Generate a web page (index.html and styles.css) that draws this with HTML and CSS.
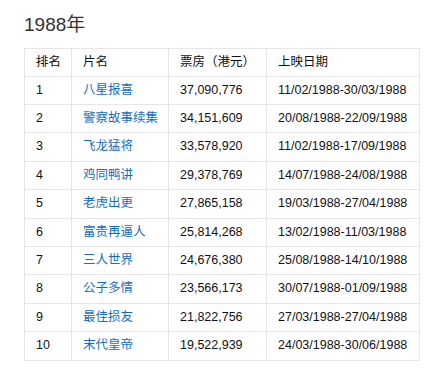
FILE: index.html
```html
<!DOCTYPE html>
<html lang="zh-CN">
<head>
<meta charset="utf-8">
<title>1988年</title>
<link rel="stylesheet" href="styles.css">
</head>
<body>
<div class="page">
  <h2 class="title">1988年</h2>
  <table class="box">
    <colgroup>
      <col class="c-rank">
      <col class="c-name">
      <col class="c-gross">
      <col class="c-date">
    </colgroup>
    <thead>
      <tr><th>排名</th><th>片名</th><th>票房（港元）</th><th>上映日期</th></tr>
    </thead>
    <tbody>
      <tr><td>1</td><td><a href="#">八星报喜</a></td><td>37,090,776</td><td>11/02/1988-30/03/1988</td></tr>
      <tr><td>2</td><td><a href="#">警察故事续集</a></td><td>34,151,609</td><td>20/08/1988-22/09/1988</td></tr>
      <tr><td>3</td><td><a href="#">飞龙猛将</a></td><td>33,578,920</td><td>11/02/1988-17/09/1988</td></tr>
      <tr><td>4</td><td><a href="#">鸡同鸭讲</a></td><td>29,378,769</td><td>14/07/1988-24/08/1988</td></tr>
      <tr><td>5</td><td><a href="#">老虎出更</a></td><td>27,865,158</td><td>19/03/1988-27/04/1988</td></tr>
      <tr><td>6</td><td><a href="#">富贵再逼人</a></td><td>25,814,268</td><td>13/02/1988-11/03/1988</td></tr>
      <tr><td>7</td><td><a href="#">三人世界</a></td><td>24,676,380</td><td>25/08/1988-14/10/1988</td></tr>
      <tr><td>8</td><td><a href="#">公子多情</a></td><td>23,566,173</td><td>30/07/1988-01/09/1988</td></tr>
      <tr><td>9</td><td><a href="#">最佳损友</a></td><td>21,822,756</td><td>27/03/1988-27/04/1988</td></tr>
      <tr><td>10</td><td><a href="#">末代皇帝</a></td><td>19,522,939</td><td>24/03/1988-30/06/1988</td></tr>
    </tbody>
  </table>
</div>
</body>
</html>
```

FILE: styles.css
```css
html, body {
  margin: 0;
  padding: 0;
  background: #fff;
}

.page {
  padding: 11px 24px 0 24px;
  font-family: "Liberation Sans", Arial, "Noto Sans CJK SC", sans-serif;
  color: #111;
}

.title {
  margin: 0 0 9px 0;
  font-size: 19px;
  line-height: 28px;
  font-weight: normal;
  color: #333;
}

.box {
  border-collapse: collapse;
  table-layout: fixed;
  width: 395px;
  font-size: 12.5px;
}

.c-rank { width: 47px; }
.c-name { width: 97px; }
.c-gross { width: 98px; }
.c-date { width: 153px; }

.box th,
.box td {
  border: 1px solid #e6e6e6;
  padding: 0 0 0 11px;
  line-height: 27.4px;
  text-align: left;
  font-weight: normal;
  white-space: nowrap;
  color: #111;
}

.box thead th {
  line-height: 26.6px;
}

.box a {
  color: #136ec2;
  text-decoration: none;
}
```
